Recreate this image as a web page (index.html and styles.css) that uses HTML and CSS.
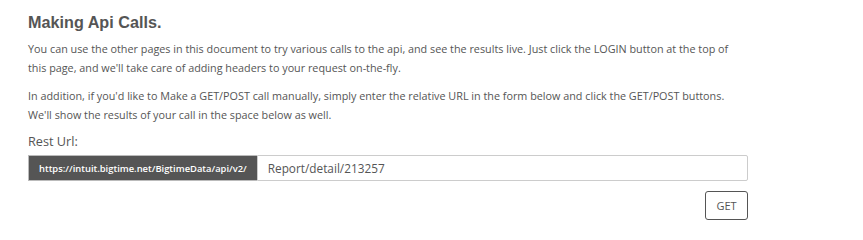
FILE: index.html
```html
<!DOCTYPE html>
<html>
<head>
<meta charset="utf-8">
<link rel="stylesheet" href="styles.css">
</head>
<body>
<div class="page">
  <h2 class="title">Making Api Calls.</h2>
  <p class="text">You can use the other pages in this document to try various calls to the api, and see the results live. Just click the LOGIN button at the top of this page, and we'll take care of adding headers to your request on-the-fly.</p>
  <p class="text">In addition, if you'd like to Make a GET/POST call manually, simply enter the relative URL in the form below and click the GET/POST buttons. We'll show the results of your call in the space below as well.</p>
  <label class="label">Rest Url:</label>
  <div class="group">
    <span class="addon">https://intuit.bigtime.net/BigtimeData/api/v2/</span>
    <input class="field" type="text" value="Report/detail/213257">
  </div>
  <div class="actions">
    <button class="btn">GET</button>
  </div>
</div>
</body>
</html>
```
FILE: styles.css
```css
html, body {
  margin: 0;
  padding: 0;
  background: #fff;
}
.page {
  width: 720px;
  padding: 11px 0 0 28px;
  font-family: "Open Sans", sans-serif;
  color: #555;
}
.title {
  margin: 0 0 6px 0;
  font-family: "Liberation Sans", Arial, sans-serif;
  font-weight: bold;
  font-size: 16.2px;
  line-height: 22px;
  color: #555;
}
.text {
  margin: 0 0 9px 0;
  font-size: 10.8px;
  line-height: 19px;
}
.label {
  display: block;
  font-size: 12.7px;
  line-height: 20px;
  margin: -2px 0 4px 0;
}
.group {
  display: flex;
  height: 26px;
}
.addon {
  display: flex;
  align-items: center;
  padding: 0 10px;
  background: #555;
  color: #fff;
  font-size: 9.4px;
  font-weight: 600;
  border: 1px solid #bbb;
  border-right: 0;
  box-sizing: border-box;
}
.field {
  flex: 1;
  box-sizing: border-box;
  height: 26px;
  border: 1px solid #ccc;
  border-radius: 0 2px 2px 0;
  padding: 0 10px;
  font-family: "Open Sans", sans-serif;
  font-size: 11.8px;
  color: #555;
  outline: none;
  margin: 0;
}
.actions {
  display: flex;
  justify-content: flex-end;
  margin-top: 10px;
}
.btn {
  width: 43px;
  height: 29px;
  background: #fff;
  border: 1px solid #555;
  border-radius: 3px;
  font-family: "Open Sans", sans-serif;
  font-size: 11px;
  color: #555;
  padding: 0;
}
```
